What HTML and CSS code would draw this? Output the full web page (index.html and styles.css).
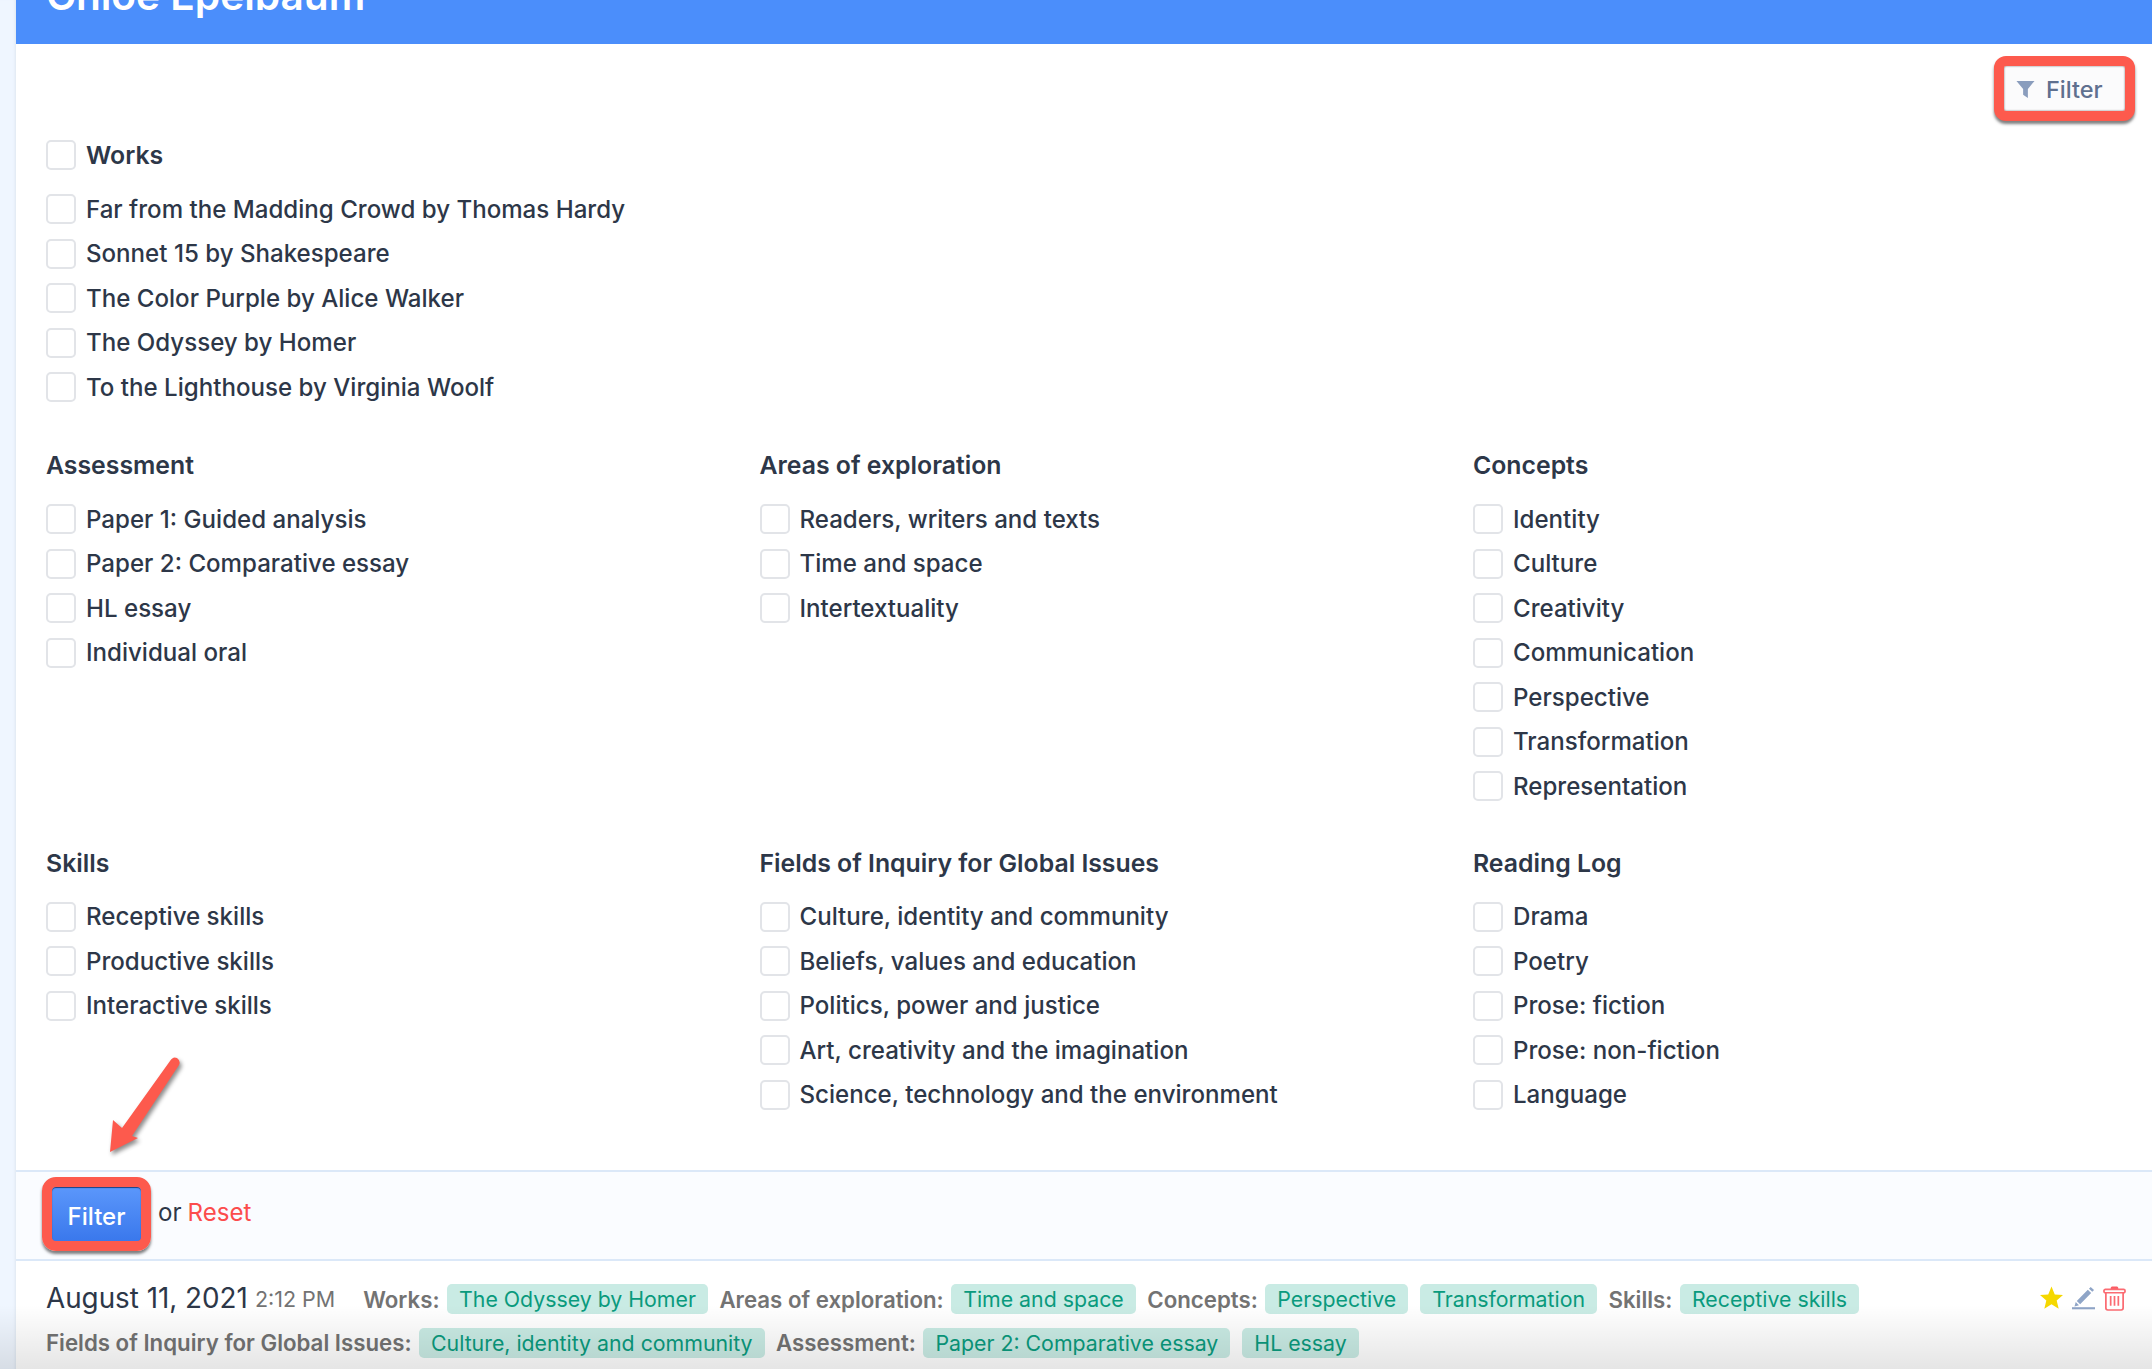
FILE: index.html
```html
<!DOCTYPE html>
<html lang="en">
<head>
<meta charset="utf-8">
<title>Chloe Epelbaum</title>
<link rel="stylesheet" href="styles.css">
</head>
<body>
<div class="page">
  <aside class="rail"></aside>
  <main class="main">
    <header class="banner"><h1>Chloe Epelbaum</h1></header>
    <div class="topbar">
      <button class="ghost-btn" type="button">
        <svg class="funnel" viewBox="0 0 20 20"><path d="M0.500 1h19L12.500 9.500V19L7.500 15.500V9.500z"/></svg>
        Filter
      </button>
    </div>
    <form class="filters">
      <section class="group works">
        <label class="head"><span class="box"></span>Works</label>
        <label class="item"><span class="box"></span>Far from the Madding Crowd by Thomas Hardy</label>
        <label class="item"><span class="box"></span>Sonnet 15 by Shakespeare</label>
        <label class="item"><span class="box"></span>The Color Purple by Alice Walker</label>
        <label class="item"><span class="box"></span>The Odyssey by Homer</label>
        <label class="item"><span class="box"></span>To the Lighthouse by Virginia Woolf</label>
      </section>
      <div class="grid">
        <section class="group">
          <h2 class="head">Assessment</h2>
          <label class="item"><span class="box"></span>Paper 1: Guided analysis</label>
          <label class="item"><span class="box"></span>Paper 2: Comparative essay</label>
          <label class="item"><span class="box"></span>HL essay</label>
          <label class="item"><span class="box"></span>Individual oral</label>
        </section>
        <section class="group">
          <h2 class="head">Areas of exploration</h2>
          <label class="item"><span class="box"></span>Readers, writers and texts</label>
          <label class="item"><span class="box"></span>Time and space</label>
          <label class="item"><span class="box"></span>Intertextuality</label>
        </section>
        <section class="group">
          <h2 class="head">Concepts</h2>
          <label class="item"><span class="box"></span>Identity</label>
          <label class="item"><span class="box"></span>Culture</label>
          <label class="item"><span class="box"></span>Creativity</label>
          <label class="item"><span class="box"></span>Communication</label>
          <label class="item"><span class="box"></span>Perspective</label>
          <label class="item"><span class="box"></span>Transformation</label>
          <label class="item"><span class="box"></span>Representation</label>
        </section>
        <section class="group">
          <h2 class="head">Skills</h2>
          <label class="item"><span class="box"></span>Receptive skills</label>
          <label class="item"><span class="box"></span>Productive skills</label>
          <label class="item"><span class="box"></span>Interactive skills</label>
        </section>
        <section class="group">
          <h2 class="head">Fields of Inquiry for Global Issues</h2>
          <label class="item"><span class="box"></span>Culture, identity and community</label>
          <label class="item"><span class="box"></span>Beliefs, values and education</label>
          <label class="item"><span class="box"></span>Politics, power and justice</label>
          <label class="item"><span class="box"></span>Art, creativity and the imagination</label>
          <label class="item"><span class="box"></span>Science, technology and the environment</label>
        </section>
        <section class="group">
          <h2 class="head">Reading Log</h2>
          <label class="item"><span class="box"></span>Drama</label>
          <label class="item"><span class="box"></span>Poetry</label>
          <label class="item"><span class="box"></span>Prose: fiction</label>
          <label class="item"><span class="box"></span>Prose: non-fiction</label>
          <label class="item"><span class="box"></span>Language</label>
        </section>
      </div>
    </form>
    <div class="actions">
      <button class="primary-btn" type="button">Filter</button>
      <span class="or">or</span>
      <a class="reset" href="#">Reset</a>
    </div>
    <article class="entry">
      <div class="entry-body">
        <div class="line">
          <span class="date">August 11, 2021</span>
          <span class="time">2:12 PM</span>
          <span class="label first">Works:</span><span class="tag">The Odyssey by Homer</span>
          <span class="label">Areas of exploration:</span><span class="tag">Time and space</span>
          <span class="label">Concepts:</span><span class="tag">Perspective</span><span class="tag">Transformation</span>
          <span class="label">Skills:</span><span class="tag">Receptive skills</span>
        </div>
        <div class="line second">
          <span class="label">Fields of Inquiry for Global Issues:</span><span class="tag">Culture, identity and community</span>
          <span class="label">Assessment:</span><span class="tag">Paper 2: Comparative essay</span><span class="tag">HL essay</span>
        </div>
      </div>
      <div class="entry-icons">
        <svg class="icon" viewBox="0 0 24 24"><path class="star" d="M12 0l3.400 8.300 8.600.6-6.600 5.600 2.100 8.700L12 18.500 4.500 23.200l2.100-8.700L0 8.900l8.600-.6z"/></svg>
        <svg class="icon" viewBox="0 0 24 24"><path class="pen" d="M19.500 0.500l3.500 3.200-1.800 1.900-3.500-3.300zM16.500 3.500l3.500 3.300L8.500 18.500l-3.500-3.300zM3.900 16.300l3.400 3.200-4.700 1.300z"/><rect class="pen" x="0" y="21.600" width="24" height="2.200"/></svg>
        <svg class="icon trash" viewBox="0 0 24 26"><path class="lid" d="M8 3V2.500C8 1 9 .5 10 .5h4c1 0 2 .5 2 2V3z"/><rect class="can" x="1" y="3.500" width="22" height="3.500" rx="1.500"/><path class="can" d="M3 7v16c0 1.200.8 2 2 2h14c1.200 0 2-.8 2-2V7"/><path class="can" d="M8 10.500v10M12 10.500v10M16 10.500v10"/></svg>
      </div>
    </article>
  </main>
  <svg class="arrow" viewBox="0 0 80 106"><path d="M68 9 Q71 4 75 6 Q79 9 77 13 L30 84 L36 86 L8 100 L11 68 L20 76 Z"/></svg>
  <div class="fade"></div>
</div>
</body>
</html>
```
FILE: styles.css
```css
* { box-sizing: border-box; }
html, body { margin: 0; padding: 0; }
body {
  width: 2152px;
  height: 1369px;
  overflow: hidden;
  background: #fff;
  color: #2d3748;
  font-family: Inter, "Liberation Sans", sans-serif;
  font-size: 24.100px;
}
.page { position: relative; display: flex; height: 1369px; overflow: hidden; }
.rail {
  flex: 0 0 16px;
  background: #eff6ff;
  box-shadow: inset -3px 0 3px -2px #dfe6f0;
}
.main { flex: 1; min-width: 0; display: flex; flex-direction: column; }
.banner {
  height: 44px;
  background: #4b8efb;
  padding-left: 30px;
  display: flex;
  align-items: flex-end;
  overflow: hidden;
}
.banner h1 {
  margin: 0;
  color: #fff;
  font-size: 40.600px;
  line-height: 44px;
  font-weight: 600;
  white-space: nowrap;
  flex: none;
  height: 44px;
  transform: translateY(-26px);
}
.topbar {
  display: flex;
  justify-content: flex-end;
  padding: 12px 17px 19px 0;
}
.ghost-btn {
  width: 141px;
  height: 65px;
  border: 10px solid #fd5a4d;
  border-radius: 12px;
  background: #fbfbfc;
  color: #5f708f;
  font: 500 23.500px Inter, "Liberation Sans", sans-serif;
  display: flex;
  align-items: center;
  gap: 11px;
  padding: 2px 0 0 12px;
  box-shadow: 0 3px 3px rgba(0,0,0,.5), inset 0 0 2px rgba(0,0,0,.6);
}
.funnel { flex: none; width: 19px; height: 19px; fill: #8a9dbd; }
.filters { padding: 0 30px; }
.group { display: flex; flex-direction: column; }
.works { margin-bottom: 40.500px; }
.grid { display: grid; grid-template-columns: repeat(3, 713.500px); row-gap: 39px; }
.head {
  display: flex;
  align-items: center;
  gap: 10px;
  height: 30px;
  margin: 0 0 17px;
  font-size: 24.800px;
  font-weight: 600;
  color: #2d3748;
}
.item {
  display: flex;
  align-items: center;
  gap: 10px;
  height: 44.500px;
  font-weight: 450;
}
.box {
  flex: none;
  width: 30px;
  height: 30px;
  background: #fff;
  border: 2px solid #e2e4e8;
  border-radius: 5px;
}
.actions {
  margin-top: 52.500px;
  height: 91px;
  display: flex;
  align-items: flex-start;
  padding: 5px 0 0 26px;
  background: #fafcff;
  border-top: 2px solid #dbe8f8;
  border-bottom: 2px solid #dbe8f8;
}
.primary-btn {
  width: 109px;
  height: 74px;
  border: 10px solid #fd5a4d;
  border-radius: 14px;
  background: linear-gradient(#5b97fb, #3a78ec);
  color: #fff;
  font: 500 24px Inter, "Liberation Sans", sans-serif;
  padding: 5px 0 0;
  box-shadow: 0 3px 3px rgba(0,0,0,.5), inset 0 1px 1px #1c3f7d;
}
.or { margin: 20px 6px 0 7px; line-height: 32px; }
.reset { margin-top: 20px; line-height: 32px; color: #fc4c4c; text-decoration: none; }
.entry { display: flex; justify-content: space-between; padding: 23.500px 26px 0 30px; }
.line { display: flex; align-items: center; height: 30px; }
.second { margin-top: 13.500px; height: 30px; }
.date { font-size: 27.800px; line-height: 30px; margin-top: -3px; }
.time { font-size: 21.500px; color: #737373; margin-left: 7px; }
.label { font-size: 22.250px; font-weight: 600; color: #737373; margin-right: 7.500px; margin-left: 11.500px; }
.label.first { margin-left: 28px; }
.second .label:first-child { margin-left: 0; }
.tag {
  height: 30px;
  line-height: 30px;
  padding: 0 12px;
  border-radius: 5px;
  background: #c9ebe4;
  color: #0a9a7d;
  font-size: 21.300px;
}
.tag + .tag { margin-left: 12px; }
.entry-icons { display: flex; gap: 8.500px; align-items: flex-start; padding-top: 2px; }
.icon { width: 23px; height: 24px; display: block; }
.star { fill: #f5d800; }
.pen { fill: #8fa5c7; }
.trash { height: 25px; }
.lid { fill: #fb5c64; }
.can { fill: none; stroke: #fb6b72; stroke-width: 1.8; }
.arrow {
  position: absolute;
  left: 102px;
  top: 1052px;
  width: 80px;
  height: 106px;
  fill: #fd5a4d;
  filter: drop-shadow(2px 3px 2px rgba(0,0,0,.45));
}
.fade {
  position: absolute;
  left: 0;
  right: 0;
  top: 1305px;
  height: 64px;
  background: linear-gradient(rgba(0,0,0,0), rgba(0,0,0,.1));
  pointer-events: none;
}
```
